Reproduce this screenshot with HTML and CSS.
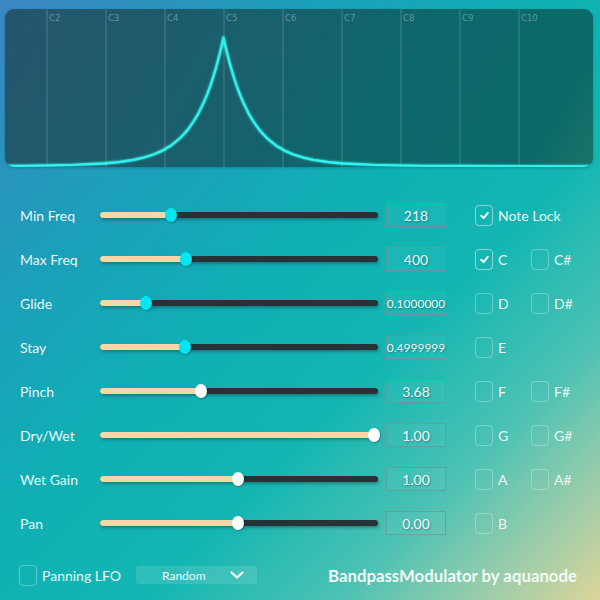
FILE: index.html
```html
<!DOCTYPE html>
<html>
<head>
<meta charset="utf-8">
<link rel="stylesheet" href="styles.css">
</head>
<body>
<div class="app">
  <div class="display">
    <svg class="graph" width="588" height="158" viewBox="0 0 588 158">
      <defs>
        <filter id="glow" x="-10%" y="-10%" width="120%" height="120%">
          <feGaussianBlur stdDeviation="1.2" result="b"/>
          <feMerge><feMergeNode in="b"/><feMergeNode in="SourceGraphic"/></feMerge>
        </filter>
      </defs>
      <g class="grid">
        <line x1="42" y1="0" x2="42" y2="158"/>
        <line x1="101" y1="0" x2="101" y2="158"/>
        <line x1="160" y1="0" x2="160" y2="158"/>
        <line x1="219" y1="0" x2="219" y2="158"/>
        <line x1="278" y1="0" x2="278" y2="158"/>
        <line x1="337" y1="0" x2="337" y2="158"/>
        <line x1="396" y1="0" x2="396" y2="158"/>
        <line x1="455" y1="0" x2="455" y2="158"/>
        <line x1="514" y1="0" x2="514" y2="158"/>
      </g>
      <g class="notes">
        <text x="44" y="12">C2</text>
        <text x="103" y="12">C3</text>
        <text x="162" y="12">C4</text>
        <text x="221" y="12">C5</text>
        <text x="280" y="12">C6</text>
        <text x="339" y="12">C7</text>
        <text x="398" y="12">C8</text>
        <text x="457" y="12">C9</text>
        <text x="516" y="12">C10</text>
      </g>
      <polyline class="curve" filter="url(#glow)" points="0,157 18.5,156.8 68.5,155.9 98.5,154.5 113.5,153.1 128.5,150.9 138.5,148.7 148.5,145.5 158.5,141.1 166.5,136.2 174.5,129.7 182.5,121.1 188.5,112.7 193.5,104.3 198.5,94.1 202.5,84.5 205.5,76.3 208.5,67.2 210.5,60.5 212.5,53.4 214.5,45.7 215.5,41.6 216.5,37.4 217.5,33 218.5,28.5 219.5,33 220.5,37.4 221.5,41.6 222.5,45.7 224.5,53.4 226.5,60.5 228.5,67.2 231.5,76.3 234.5,84.5 238.5,94.1 243.5,104.3 248.5,112.7 254.5,121.1 262.5,129.7 270.5,136.2 278.5,141.1 288.5,145.5 298.5,148.7 308.5,150.9 323.5,153.1 338.5,154.5 368.5,155.9 418.5,156.8 436.5,156.9 588,157.3"/>
    </svg>
  </div>

  <div class="rows">
    <div class="row">
      <span class="label">Min Freq</span>
      <div class="slider"><div class="fill" style="width:71px"></div><div class="thumb cyan"></div></div>
      <div class="value">218</div>
      <div class="checks">
        <div class="check on"><span class="box"><svg viewBox="0 0 10 10"><polyline points="2,5.2 4.2,7.4 8,2.6"/></svg></span><span>Note Lock</span></div>
      </div>
    </div>
    <div class="row">
      <span class="label">Max Freq</span>
      <div class="slider"><div class="fill" style="width:86px"></div><div class="thumb cyan"></div></div>
      <div class="value">400</div>
      <div class="checks">
        <div class="check on"><span class="box"><svg viewBox="0 0 10 10"><polyline points="2,5.2 4.2,7.4 8,2.6"/></svg></span><span>C</span></div>
        <div class="check"><span class="box"></span><span>C#</span></div>
      </div>
    </div>
    <div class="row">
      <span class="label">Glide</span>
      <div class="slider"><div class="fill" style="width:46px"></div><div class="thumb cyan"></div></div>
      <div class="value small">0.1000000</div>
      <div class="checks">
        <div class="check"><span class="box"></span><span>D</span></div>
        <div class="check"><span class="box"></span><span>D#</span></div>
      </div>
    </div>
    <div class="row">
      <span class="label">Stay</span>
      <div class="slider"><div class="fill" style="width:85px"></div><div class="thumb cyan"></div></div>
      <div class="value small">0.4999999</div>
      <div class="checks">
        <div class="check"><span class="box"></span><span>E</span></div>
      </div>
    </div>
    <div class="row">
      <span class="label">Pinch</span>
      <div class="slider"><div class="fill" style="width:101px"></div><div class="thumb"></div></div>
      <div class="value">3.68</div>
      <div class="checks">
        <div class="check"><span class="box"></span><span>F</span></div>
        <div class="check"><span class="box"></span><span>F#</span></div>
      </div>
    </div>
    <div class="row">
      <span class="label">Dry/Wet</span>
      <div class="slider"><div class="fill" style="width:274px"></div><div class="thumb"></div></div>
      <div class="value">1.00</div>
      <div class="checks">
        <div class="check"><span class="box"></span><span>G</span></div>
        <div class="check"><span class="box"></span><span>G#</span></div>
      </div>
    </div>
    <div class="row">
      <span class="label">Wet Gain</span>
      <div class="slider"><div class="fill" style="width:138px"></div><div class="thumb"></div></div>
      <div class="value">1.00</div>
      <div class="checks">
        <div class="check"><span class="box"></span><span>A</span></div>
        <div class="check"><span class="box"></span><span>A#</span></div>
      </div>
    </div>
    <div class="row">
      <span class="label">Pan</span>
      <div class="slider"><div class="fill" style="width:138px"></div><div class="thumb"></div></div>
      <div class="value">0.00</div>
      <div class="checks">
        <div class="check"><span class="box"></span><span>B</span></div>
      </div>
    </div>
  </div>

  <div class="bottom">
    <div class="check lfo"><span class="box"></span><span>Panning LFO</span></div>
    <div class="dropdown"><span>Random</span><svg class="chev" viewBox="0 0 14 8"><polyline points="1.5,1.5 7,6.5 12.5,1.5"/></svg></div>
    <div class="title">BandpassModulator by aquanode</div>
  </div>
</div>
</body>
</html>
```

FILE: styles.css
```css
html, body {
  margin: 0;
  padding: 0;
}
body {
  font-family: Lato, "Noto Sans", "DejaVu Sans", sans-serif;
  color: #eef7f7;
}
.app {
  width: 600px;
  height: 600px;
  overflow: hidden;
  background: linear-gradient(135deg, #3b86c2 0%, #1c9fba 25%, #0fb0b4 45%, #14b6b2 62%, #4cc2b4 78%, #9ccdaa 90%, #dcd598 100%);
  display: flex;
  flex-direction: column;
}
.display {
  margin: 9px 7px 0 5px;
  height: 158px;
  border-radius: 9px;
  overflow: hidden;
  background: linear-gradient(120deg, #25546c 0%, #1a5e6c 35%, #0d676b 65%, #0b6a68 90%, #1a7468 100%);
  box-shadow: 0 1px 3px rgba(0, 40, 60, 0.25);
}
.graph {
  display: block;
}
.grid line {
  stroke: rgba(190, 215, 220, 0.28);
  stroke-width: 1;
}
.notes text {
  font-family: "DejaVu Sans", sans-serif;
  font-size: 8.5px;
  fill: rgba(200, 220, 225, 0.45);
}
.curve {
  fill: none;
  stroke: #32f0ec;
  stroke-width: 2.3;
  stroke-linejoin: round;
  stroke-linecap: round;
}
.rows {
  margin-top: 26px;
  display: flex;
  flex-direction: column;
}
.row {
  height: 44px;
  display: flex;
  align-items: center;
  padding-left: 20px;
}
.label {
  width: 80px;
  flex: none;
  font-size: 14px;
  color: #eaf6f6;
}
.slider {
  position: relative;
  flex: none;
  width: 278px;
  height: 6px;
  border-radius: 3px;
  background: #263236;
  box-shadow: 1px 2px 3px rgba(0, 40, 50, 0.35);
}
.fill {
  height: 6px;
  border-radius: 3px;
  background: #f3d9a8;
  position: relative;
}
.thumb {
  position: absolute;
  top: -4px;
  width: 12px;
  height: 14px;
  border-radius: 50%;
  background: #ffffff;
  margin-left: -6px;
  box-shadow: 1px 1px 2px rgba(0, 40, 50, 0.3);
}
.row:nth-child(1) .thumb { left: 71px; }
.row:nth-child(2) .thumb { left: 86px; }
.row:nth-child(3) .thumb { left: 46px; }
.row:nth-child(4) .thumb { left: 85px; }
.row:nth-child(5) .thumb { left: 101px; }
.row:nth-child(6) .thumb { left: 274px; }
.row:nth-child(7) .thumb { left: 138px; }
.row:nth-child(8) .thumb { left: 138px; }
.thumb.cyan {
  background: #00e6f2;
}
.value {
  flex: none;
  margin-left: 8px;
  width: 58px;
  height: 22px;
  border: 1px solid rgba(110, 150, 150, 0.75);
  background: rgba(255, 255, 255, 0.04);
  display: flex;
  align-items: center;
  justify-content: center;
  font-size: 14px;
  color: #f0f8f8;
  text-shadow: 1px 1px 2px rgba(0, 60, 60, 0.45);
}
.value.small {
  font-size: 12px;
}
.checks {
  margin-left: 29px;
  display: flex;
  align-items: center;
}
.check {
  display: flex;
  align-items: center;
  font-size: 14px;
  color: #eaf6f6;
  width: 56px;
  flex: none;
}
.box {
  box-sizing: border-box;
  flex: none;
  width: 18px;
  height: 21px;
  border-radius: 4px;
  border: 1.5px solid rgba(210, 240, 240, 0.38);
  margin-right: 5px;
  display: flex;
  align-items: center;
  justify-content: center;
}
.check.on .box {
  border-color: rgba(225, 245, 245, 0.55);
}
.box svg {
  width: 11px;
  height: 11px;
}
.box polyline {
  fill: none;
  stroke: #ffffff;
  stroke-width: 1.8;
  stroke-linecap: round;
  stroke-linejoin: round;
}
.check.on span:last-child {
  white-space: nowrap;
}
.bottom {
  margin-top: 19px;
  height: 22px;
  display: flex;
  align-items: center;
  padding-left: 19px;
}
.check.lfo {
  width: auto;
}
.check.lfo .box {
  margin-right: 5px;
}
.dropdown {
  margin-left: 15px;
  width: 121px;
  height: 18px;
  border-radius: 3px;
  background: rgba(255, 255, 255, 0.12);
  display: flex;
  align-items: center;
  font-size: 12px;
  color: #eef7f7;
}
.dropdown span {
  margin-left: 26px;
}
.chev {
  width: 14px;
  height: 8px;
  margin-left: auto;
  margin-right: 13px;
}
.chev polyline {
  fill: none;
  stroke: #ffffff;
  stroke-width: 2.2;
  stroke-linecap: round;
  stroke-linejoin: round;
}
.title {
  margin-left: auto;
  margin-right: 23px;
  font-size: 16.8px;
  font-weight: bold;
  color: #f2faf6;
}
```
